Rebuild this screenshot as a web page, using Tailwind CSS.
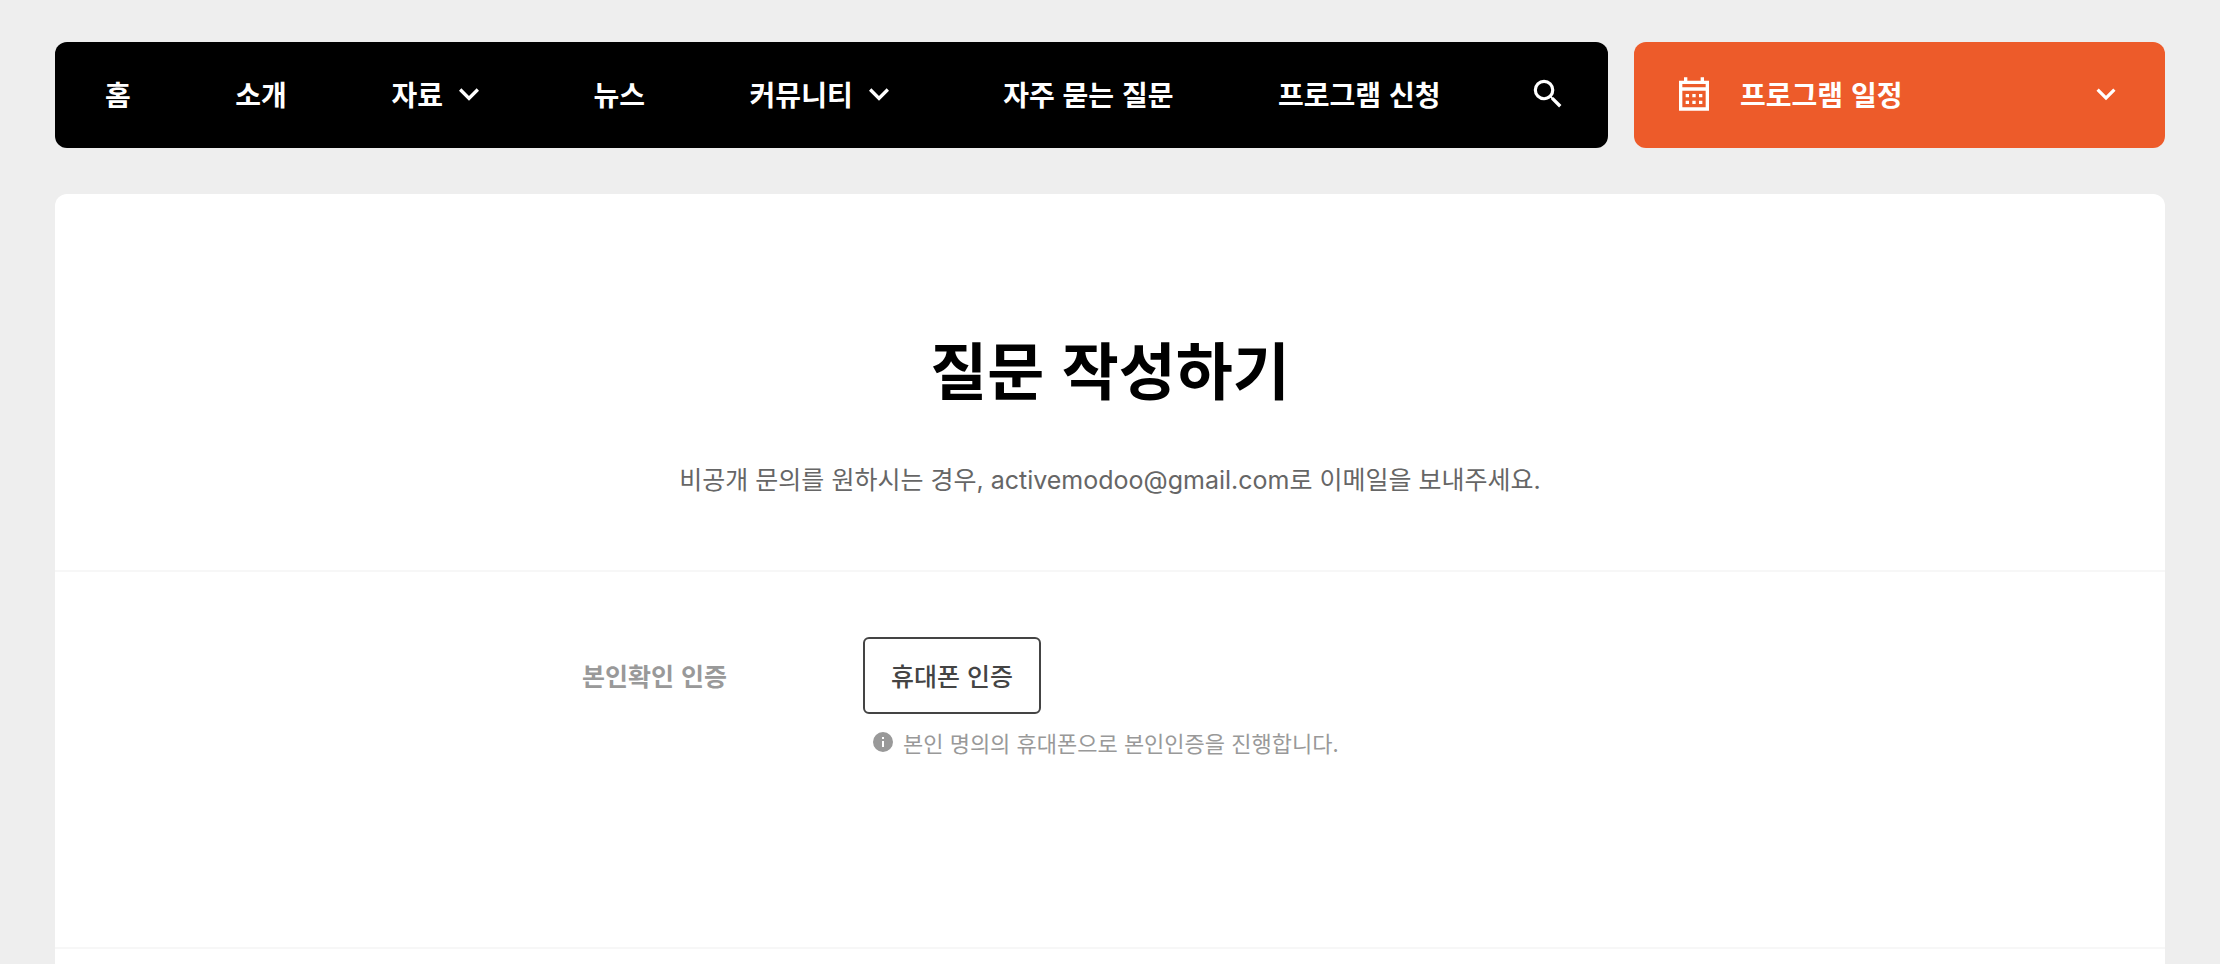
<!DOCTYPE html>
<html lang="ko">
<head>
  <meta charset="UTF-8">
  <meta name="viewport" content="width=device-width, initial-scale=1.0">
  <title>질문 작성하기</title>
  <script src="https://cdn.jsdelivr.net/npm/@tailwindcss/browser@4"></script>
</head>
<body class="flex min-h-screen flex-col bg-[#eeeeee] px-[55px] pt-[42px] font-['Noto_Sans_CJK_KR',sans-serif]">

<!-- 상단 메뉴 -->
<header class="flex gap-[26px] text-[28px] leading-10 font-bold text-white">
  <nav class="flex h-[106px] flex-1 items-center justify-between rounded-xl bg-black pr-[41px] pb-0.5 pl-[50px]">
    <a href="#">홈</a>
    <a href="#">소개</a>
    <button type="button" class="flex items-center gap-1.5">
      자료
      <svg class="size-10" viewBox="0 0 24 24" fill="currentColor"><path d="M7.41 8.59 12 13.17l4.59-4.58L18 10l-6 6-6-6z"/></svg>
    </button>
    <a href="#">뉴스</a>
    <button type="button" class="flex items-center gap-1.5">
      커뮤니티
      <svg class="size-10" viewBox="0 0 24 24" fill="currentColor"><path d="M7.41 8.59 12 13.17l4.59-4.58L18 10l-6 6-6-6z"/></svg>
    </button>
    <a href="#">자주 묻는 질문</a>
    <a href="#">프로그램 신청</a>
    <button type="button" aria-label="검색" class="-ml-4">
      <svg class="size-[38px]" viewBox="0 0 24 24" fill="currentColor"><path d="M15.5 14h-.79l-.28-.27A6.47 6.47 0 0 0 16 9.5 6.5 6.5 0 1 0 9.5 16c1.61 0 3.09-.59 4.23-1.57l.27.28v.79l5 4.99L20.49 19zm-6 0a4.5 4.5 0 1 1 0-9 4.5 4.5 0 0 1 0 9z"/></svg>
    </button>
  </nav>

  <button type="button" class="flex h-[106px] w-[531px] items-center rounded-xl bg-[#ed5b2a] px-10 pb-0.5">
    <svg class="size-10" viewBox="0 0 24 24" fill="currentColor">
      <path fill-rule="evenodd" d="M6 2h2v2h8V2h2v2h3v18H3V4h3zM5 6v2h14V6zM5 10v10h14V10z"/>
      <path d="M7 12h2v2H7zM11 12h2v2h-2zM15 12h2v2h-2zM7 16h2v2H7zM11 16h2v2h-2zM15 16h2v2h-2z"/>
    </svg>
    <span class="ml-[26px]">프로그램 일정</span>
    <svg class="ml-auto size-[38px]" viewBox="0 0 24 24" fill="currentColor"><path d="M7.41 8.59 12 13.17l4.59-4.58L18 10l-6 6-6-6z"/></svg>
  </button>
</header>

<!-- 본문 -->
<main class="mt-[46px] flex-1 rounded-t-xl bg-white">
  <div class="border-b-2 border-[#f7f7f7] pt-[129px] pb-[72px] text-center">
    <h1 class="text-[62px] leading-[90px] font-bold text-black">질문 작성하기</h1>
    <p class="mt-[49px] font-[Inter,'Noto_Sans_CJK_KR',sans-serif] text-[25px] leading-9 text-[#666666]">비공개 문의를 원하시는 경우, activemodoo@gmail.com로 이메일을 보내주세요.</p>
  </div>

  <form class="border-b-2 border-[#f7f7f7] pt-[65px] pb-[189px]">
    <div class="mx-auto flex max-w-[1056px] items-start text-[25px]">
      <label for="phoneAuth" class="w-[281px] py-5 leading-9 font-bold text-[#999999]">본인확인 인증</label>
      <div>
        <button type="button" id="phoneAuth" class="h-[77px] rounded-md border-2 border-[#444444] px-[26px] font-medium text-[#444444]">휴대폰 인증</button>
        <p class="mt-3 flex items-center gap-2 pl-2 text-[22px] leading-8 text-[#999999]">
          <svg class="size-6" viewBox="0 0 24 24" fill="currentColor"><path d="M12 2a10 10 0 1 0 0 20 10 10 0 0 0 0-20zm1 15h-2v-6h2zm0-8h-2V7h2z"/></svg>
          본인 명의의 휴대폰으로 본인인증을 진행합니다.
        </p>
      </div>
    </div>
  </form>
</main>

</body>
</html>
